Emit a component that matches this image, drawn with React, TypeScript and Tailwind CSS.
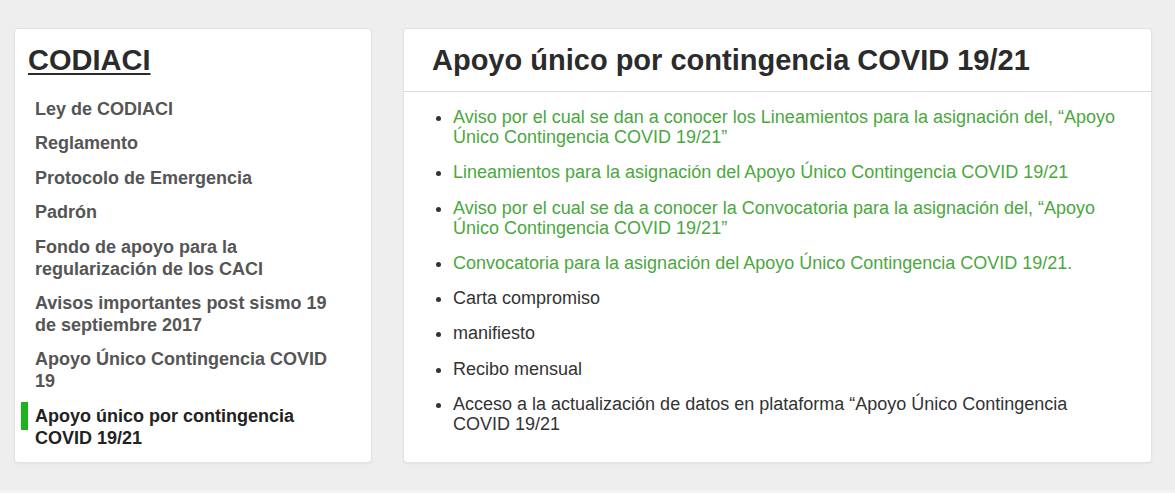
const nav = [
  "Ley de CODIACI",
  "Reglamento",
  "Protocolo de Emergencia",
  "Padrón",
  "Fondo de apoyo para la regularización de los CACI",
  "Avisos importantes post sismo 19 de septiembre 2017",
  "Apoyo Único Contingencia COVID 19",
];

const docs: { text: string; link?: boolean }[] = [
  {
    text: "Aviso por el cual se dan a conocer los Lineamientos para la asignación del, “Apoyo Único Contingencia COVID 19/21”",
    link: true,
  },
  { text: "Lineamientos para la asignación del Apoyo Único Contingencia COVID 19/21", link: true },
  {
    text: "Aviso por el cual se da a conocer la Convocatoria para la asignación del, “Apoyo Único Contingencia COVID 19/21”",
    link: true,
  },
  { text: "Convocatoria para la asignación del Apoyo Único Contingencia COVID 19/21.", link: true },
  { text: "Carta compromiso" },
  { text: "manifiesto" },
  { text: "Recibo mensual" },
  { text: "Acceso a la actualización de datos en plataforma “Apoyo Único Contingencia COVID 19/21" },
];

export default function App() {
  return (
    <div className="flex h-[493px] w-full flex-col bg-[#eeeeee] font-['Liberation_Sans',Arial,sans-serif]">
      <div className="flex items-stretch gap-[31px] px-[14px] pt-[28px]">
        {/* sidebar */}
        <aside className="w-[358px] shrink-0 rounded-[4px] border border-[#e2e2e2] bg-white px-[13px] pb-[13px] pt-[15px] shadow-[0_1px_2px_rgba(0,0,0,0.05)]">
          <h2 className="text-[29px] font-bold leading-[33px] text-[#2b2b2b] underline decoration-2 underline-offset-[3px]">
            CODIACI
          </h2>
          <ul className="mt-[21px] flex flex-col gap-[12.4px] pr-[18px]">
            {nav.map((item) => (
              <li key={item} className="pl-[7px] text-[18px] font-bold leading-[22px] text-[#555555]">
                {item}
              </li>
            ))}
            <li className="relative pl-[7px] text-[18px] font-bold leading-[22px] text-[#222222]">
              <span className="absolute left-[-7px] top-[-3px] h-[28px] w-[7px] bg-[#1db31d]" />
              Apoyo único por contingencia COVID 19/21
            </li>
          </ul>
        </aside>

        {/* main card */}
        <section className="w-[749px] shrink-0 rounded-[4px] border border-[#e2e2e2] bg-white shadow-[0_1px_2px_rgba(0,0,0,0.05)]">
          <header className="border-b border-[#dcdcdc] px-[28px] pb-[14px] pt-[15px]">
            <h1 className="text-[29px] font-bold leading-[33px] text-[#2b2b2b]">
              Apoyo único por contingencia COVID 19/21
            </h1>
          </header>
          <ul className="flex list-disc flex-col gap-[15.3px] pl-[49px] pr-[28px] pt-[15px] text-[18px] leading-[20px]">
            {docs.map((d) => (
              <li
                key={d.text}
                className={d.link ? "text-[#4aa83e] marker:text-[#333333]" : "text-[#333333]"}
              >
                {d.text}
              </li>
            ))}
          </ul>
        </section>
      </div>
      <div className="mt-auto h-[3px] bg-[#f3f3f3]" />
    </div>
  );
}
